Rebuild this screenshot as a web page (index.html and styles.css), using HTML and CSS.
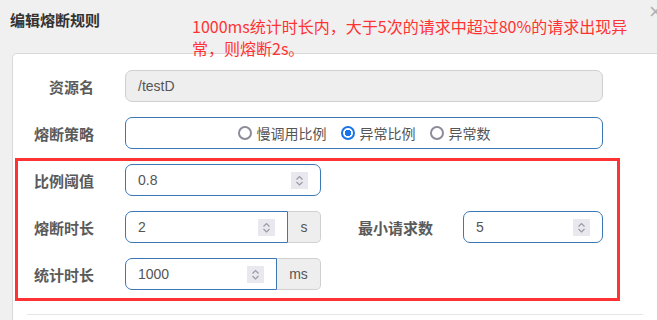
FILE: index.html
```html
<!DOCTYPE html>
<html lang="zh-CN">
<head>
    <meta charset="UTF-8">
    <title>编辑熔断规则</title>
    <link rel="stylesheet" href="styles.css">
</head>
<body>

    <div class="dialog">
        <div class="dialog-header">
            <h4 class="dialog-title">编辑熔断规则</h4>
            <span class="close">×</span>
        </div>

        <p class="note">1000ms统计时长内，大于5次的请求中超过80%的请求出现异常，则熔断2s。</p>

        <div class="dialog-body">
            <div class="form-row">
                <label class="form-label">资源名</label>
                <div class="input input-wide disabled">/testD</div>
            </div>

            <div class="form-row">
                <label class="form-label">熔断策略</label>
                <div class="input input-wide radio-box">
                    <span class="radio"><i class="dot"></i>慢调用比例</span>
                    <span class="radio checked"><i class="dot"></i>异常比例</span>
                    <span class="radio"><i class="dot"></i>异常数</span>
                </div>
            </div>

            <div class="group">
                <div class="form-row">
                    <label class="form-label">比例阈值</label>
                    <div class="input input-half">
                        <span class="value">0.8</span>
                        <span class="spin"><svg viewBox="0 0 17 17"><path d="M5.5 7.5L8.5 4.5L11.5 7.5M5.5 10L8.5 13L11.5 10"/></svg></span>
                    </div>
                </div>

                <div class="form-row">
                    <label class="form-label">熔断时长</label>
                    <div class="input-group">
                        <div class="input input-left" style="width: 163px;">
                            <span class="value">2</span>
                            <span class="spin"><svg viewBox="0 0 17 17"><path d="M5.5 7.5L8.5 4.5L11.5 7.5M5.5 10L8.5 13L11.5 10"/></svg></span>
                        </div>
                        <span class="addon">s</span>
                    </div>
                    <label class="form-label side-label">最小请求数</label>
                    <div class="input input-small">
                        <span class="value">5</span>
                        <span class="spin"><svg viewBox="0 0 17 17"><path d="M5.5 7.5L8.5 4.5L11.5 7.5M5.5 10L8.5 13L11.5 10"/></svg></span>
                    </div>
                </div>

                <div class="form-row">
                    <label class="form-label">统计时长</label>
                    <div class="input-group">
                        <div class="input input-left" style="width: 152px;">
                            <span class="value">1000</span>
                            <span class="spin"><svg viewBox="0 0 17 17"><path d="M5.5 7.5L8.5 4.5L11.5 7.5M5.5 10L8.5 13L11.5 10"/></svg></span>
                        </div>
                        <span class="addon">ms</span>
                    </div>
                </div>
            </div>

            <div class="dialog-footer"></div>
        </div>
    </div>

</body>
</html>
```

FILE: styles.css
```css
body {
    margin: 0;
    background-color: #f0f0f0;
    font-family: "Liberation Sans", "Noto Sans CJK SC", sans-serif;
    color: #555;
    overflow: hidden;
}

.dialog {
    position: relative;
    height: 320px;
    overflow: hidden;
}

.dialog-header {
    height: 53px;
    display: flex;
    align-items: flex-start;
}

.dialog-title {
    margin: 9px 0 0 10px;
    font-family: "Noto Sans CJK SC", sans-serif;
    font-size: 15px;
    line-height: 22px;
    font-weight: bold;
    color: #333;
}

.close {
    position: absolute;
    left: 649px;
    top: 0;
    font-size: 22px;
    line-height: 24px;
    color: #b0b0b0;
}

/* 标注文字 */
.note {
    position: absolute;
    left: 192px;
    top: 15px;
    width: 450px;
    margin: 0;
    font-family: "Noto Sans CJK SC", sans-serif;
    font-size: 16px;
    line-height: 22px;
    color: #ff3333;
}

.dialog-body {
    margin-left: 12px;
    width: 680px;
    height: 280px;
    padding-top: 16px;
    background-color: #fff;
    border: 1px solid #d9d9d9;
    border-radius: 5px;
}

.form-row {
    display: flex;
    align-items: center;
    margin-bottom: 15px;
}

.form-label {
    width: 81px;
    margin-right: 31px;
    text-align: right;
    font-family: "Noto Sans CJK SC", sans-serif;
    font-size: 15px;
    font-weight: bold;
    color: #5a5a5a;
}

.input {
    box-sizing: border-box;
    height: 32px;
    display: flex;
    align-items: center;
    padding: 0 12px;
    border: 1px solid #3b78b5;
    border-radius: 7px;
    font-size: 14px;
    color: #555;
    background-color: #fff;
}

.input .value {
    flex: 1;
}

.input-wide {
    width: 478px;
}

.input-half {
    width: 196px;
}

.input-small {
    width: 140px;
}

.disabled {
    background-color: #eee;
    border-color: #d0d0d0;
}

.radio-box {
    justify-content: center;
    gap: 14px;
    font-family: "Noto Sans CJK SC", sans-serif;
}

.radio {
    display: flex;
    align-items: center;
    gap: 5px;
    font-size: 14px;
    color: #555;
}

.radio .dot {
    box-sizing: border-box;
    width: 14px;
    height: 14px;
    border: 2px solid #8c8c99;
    border-radius: 50%;
}

.radio.checked .dot {
    border-color: #1a73e8;
    background: radial-gradient(circle, #1a73e8 0 3px, #fff 3.5px);
}

.spin {
    width: 17px;
    height: 17px;
    background-color: #e8e8ee;
}

.spin svg {
    display: block;
    width: 17px;
    height: 17px;
    fill: none;
    stroke: #9a9aa6;
    stroke-width: 1.2;
}

.input-group {
    display: flex;
    width: 196px;
}

.input-left {
    border-radius: 7px 0 0 7px;
}

.addon {
    flex: 1;
    box-sizing: border-box;
    height: 32px;
    display: flex;
    align-items: center;
    justify-content: center;
    background-color: #eee;
    border: 1px solid #d0d0d0;
    border-left: none;
    border-radius: 0 5px 5px 0;
    font-size: 14px;
    color: #555;
}

.side-label {
    width: auto;
    margin-left: 37px;
    margin-right: 30px;
}

/* 标注红框 */
.group {
    width: 599px;
    margin: -6px 0 0 2px;
    padding: 3px 0 8px;
    border: 3px solid #ff3333;
}

.group .form-label {
    width: 76px;
}

.group .side-label {
    width: auto;
}

.group .form-row:last-child {
    margin-bottom: 0;
}

.dialog-footer {
    width: 616px;
    margin: 13px 0 0 14px;
    border-top: 1px solid #e5e5e5;
}
```
